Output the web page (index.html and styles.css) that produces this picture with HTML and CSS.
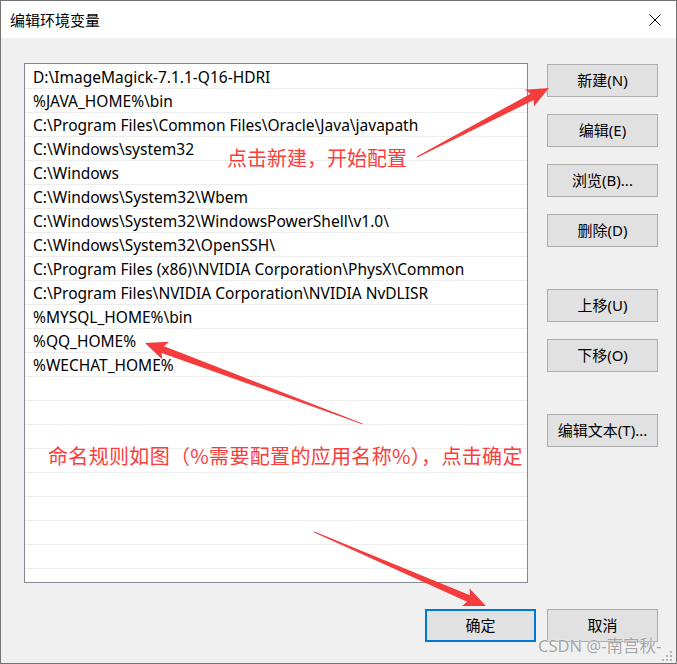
FILE: index.html
```html
<!DOCTYPE html>
<html lang="zh-CN">
<head>
<meta charset="utf-8">
<title>编辑环境变量</title>
<link rel="stylesheet" href="styles.css">
</head>
<body>
<div class="window">
  <div class="titlebar">
    <span class="title">编辑环境变量</span>
    <svg class="close" width="12" height="12" viewBox="0 0 12 12"><path d="M0.5 0.5 L11.5 11.5 M11.5 0.5 L0.5 11.5" stroke="#000" stroke-width="1" fill="none"/></svg>
  </div>
  <div class="content">
    <div class="main">
      <div class="list">
        <div class="row">D:\ImageMagick-7.1.1-Q16-HDRI</div>
        <div class="row">%JAVA_HOME%\bin</div>
        <div class="row">C:\Program Files\Common Files\Oracle\Java\javapath</div>
        <div class="row">C:\Windows\system32</div>
        <div class="row">C:\Windows</div>
        <div class="row">C:\Windows\System32\Wbem</div>
        <div class="row">C:\Windows\System32\WindowsPowerShell\v1.0\</div>
        <div class="row">C:\Windows\System32\OpenSSH\</div>
        <div class="row">C:\Program Files (x86)\NVIDIA Corporation\PhysX\Common</div>
        <div class="row">C:\Program Files\NVIDIA Corporation\NVIDIA NvDLISR</div>
        <div class="row">%MYSQL_HOME%\bin</div>
        <div class="row">%QQ_HOME%</div>
        <div class="row">%WECHAT_HOME%</div>
        <div class="row"></div>
        <div class="row"></div>
        <div class="row"></div>
        <div class="row"></div>
        <div class="row"></div>
        <div class="row"></div>
        <div class="row"></div>
        <div class="row"></div>
        <div class="row"></div>
      </div>
      <div class="side">
        <button class="btn">新建(N)</button>
        <button class="btn">编辑(E)</button>
        <button class="btn">浏览(B)...</button>
        <button class="btn">删除(D)</button>
        <button class="btn sep">上移(U)</button>
        <button class="btn">下移(O)</button>
        <button class="btn sep">编辑文本(T)...</button>
      </div>
    </div>
    <div class="footer">
      <button class="btn default">确定</button>
      <button class="btn">取消</button>
    </div>
  </div>

  <div class="overlay">
    <svg class="arrows" width="677" height="664" viewBox="0 0 677 664">
      <g transform="translate(549 88) rotate(-27.6)">
        <polygon class="arrow" points="0,0 -22,-9.5 -19,-3.5 -149,-0.5 -149,0.5 -19,3.5 -22,9.5"/>
      </g>
      <g transform="translate(145 343) rotate(-159.6)">
        <polygon class="arrow" points="0,0 -22,-9.5 -19,-3.5 -232,-0.5 -232,0.5 -19,3.5 -22,9.5"/>
      </g>
      <g transform="translate(486 606) rotate(23.3)">
        <polygon class="arrow" points="0,0 -22,-9.5 -19,-3.5 -187,-0.5 -187,0.5 -19,3.5 -22,9.5"/>
      </g>
    </svg>
    <span class="note note-new">点击新建，开始配置</span>
    <span class="note note-name">命名规则如图（%需要配置的应用名称%），点击确定</span>
    <span class="watermark">CSDN @-南宫秋-</span>
    <svg class="grip" width="12" height="12" viewBox="0 0 12 12">
      <rect x="8" y="0" width="2" height="2"/>
      <rect x="4" y="4" width="2" height="2"/>
      <rect x="8" y="4" width="2" height="2"/>
      <rect x="0" y="8" width="2" height="2"/>
      <rect x="4" y="8" width="2" height="2"/>
      <rect x="8" y="8" width="2" height="2"/>
    </svg>
  </div>
</div>
</body>
</html>
```
FILE: styles.css
```css
html, body {
  margin: 0;
  padding: 0;
  background: #f0f0f0;
}

.window {
  position: relative;
  width: 677px;
  height: 664px;
  box-sizing: border-box;
  border: 1px solid #737373;
  background: #f0f0f0;
  font-family: "Noto Sans", "Noto Sans CJK SC", sans-serif;
  font-size: 15px;
  color: #000;
  overflow: hidden;
}

.titlebar {
  height: 37px;
  background: #fff;
  display: flex;
  align-items: center;
  justify-content: space-between;
  padding: 0 15px 0 9px;
}

.title {
  font-family: "Noto Sans CJK SC", sans-serif;
  font-size: 15px;
  line-height: 20px;
}

.close {
  display: block;
  margin-top: 1px;
}

.content {
  padding: 25px 18px 0 23px;
}

.main {
  display: flex;
  gap: 19px;
}

.list {
  width: 504px;
  height: 520px;
  box-sizing: border-box;
  border: 1px solid #828790;
  background: #fff;
  padding-top: 1px;
  overflow: hidden;
}

.row {
  height: 24px;
  box-sizing: border-box;
  border-bottom: 1px solid #ededed;
  padding-left: 8px;
  padding-top: 1px;
  line-height: 22px;
  white-space: nowrap;
  font-size: 15.5px;
}

.side {
  display: flex;
  flex-direction: column;
  gap: 17px;
  padding-top: 1px;
}

.btn {
  width: 111px;
  height: 33px;
  box-sizing: border-box;
  background: #e1e1e1;
  border: 1px solid #adadad;
  border-radius: 0;
  padding: 0 0 1px 0;
  margin: 0;
  font-family: "Noto Sans", "Noto Sans CJK SC", sans-serif;
  font-size: 15px;
  color: #000;
  line-height: 20px;
}

.btn.sep {
  margin-top: 25px;
}

.btn.default {
  border: 2px solid #0078d7;
}

.footer {
  display: flex;
  justify-content: flex-end;
  gap: 11px;
  margin-top: 26px;
}

.overlay {
  position: absolute;
  top: -1px;
  left: -1px;
  width: 677px;
  height: 664px;
  pointer-events: none;
}

.arrows {
  position: absolute;
  top: 0;
  left: 0;
}

.arrow {
  fill: #f43c3c;
}

.note {
  position: absolute;
  font-family: "Noto Sans CJK SC", sans-serif;
  font-size: 20px;
  line-height: 20px;
  color: #fb3d3d;
  white-space: nowrap;
}

.note-new {
  left: 227px;
  top: 148px;
}

.note-name {
  left: 48px;
  top: 446px;
  letter-spacing: 0.33px;
}

.watermark {
  position: absolute;
  left: 538px;
  top: 636px;
  font-family: "Noto Sans", "Noto Sans CJK SC", sans-serif;
  font-size: 16.5px;
  line-height: 20px;
  color: #a3a3a3;
  text-shadow: 0 0 1px #fff, 0 0 1px #fff;
  white-space: nowrap;
}

.grip {
  position: absolute;
  left: 662px;
  top: 651px;
  fill: #b5b5b5;
}
```
